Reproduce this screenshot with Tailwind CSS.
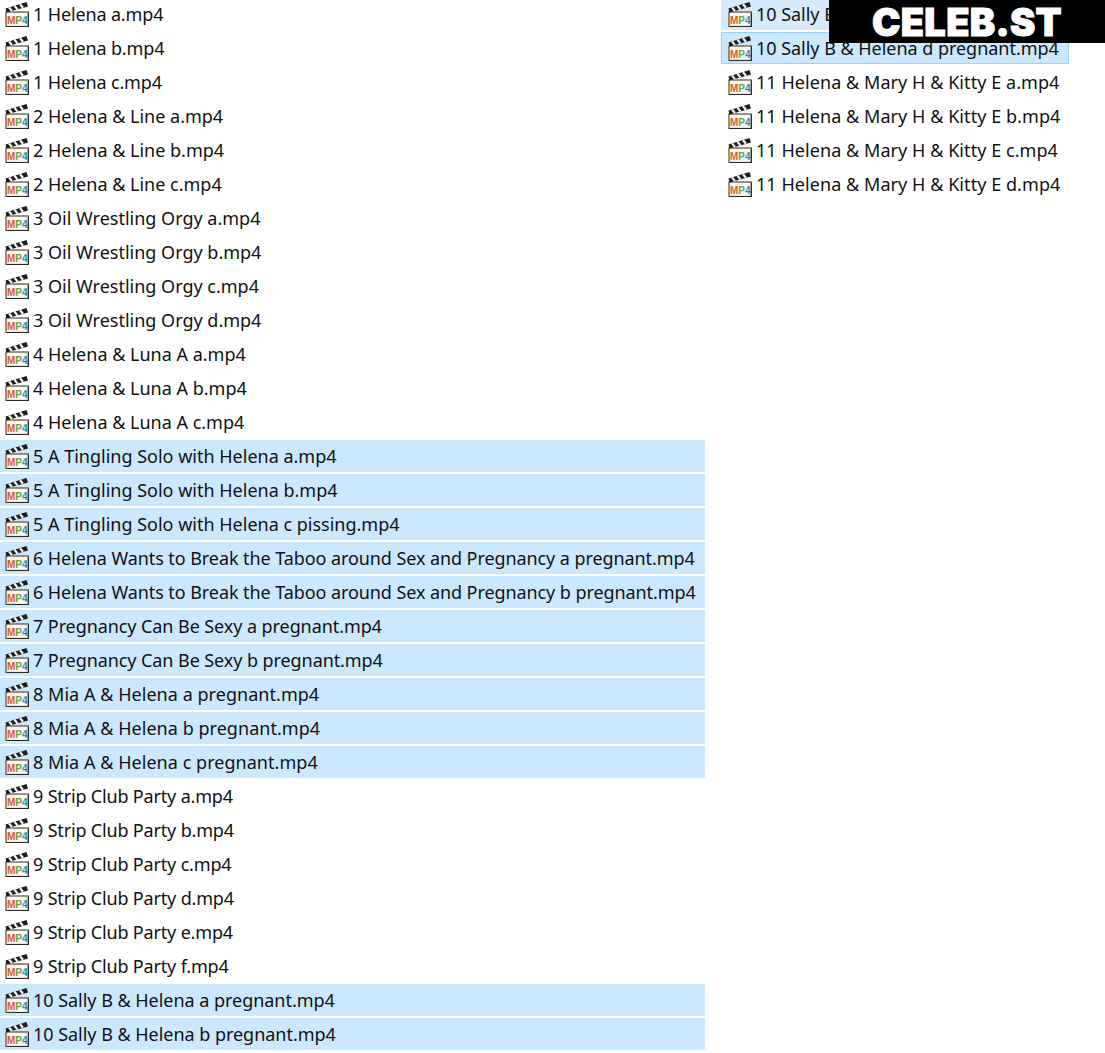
<!doctype html>
<html><head><meta charset="utf-8"><script src="https://cdn.jsdelivr.net/npm/@tailwindcss/browser@4"></script></head>
<body class="bg-white">
<svg class="hidden" width="0" height="0"><defs><symbol id="mp4" viewBox="0 0 24 26">
<rect x="1" y="11" width="22.5" height="14.5" fill="#fbf8f0" stroke="#5a4a3a" stroke-width="1.2"/>
<path d="M23.4 12 V25.6 H2" fill="none" stroke="#2c2a26" stroke-width="1.4"/>
<path d="M0.5 7.5 L21.5 1 L23 5.5 L1.5 11.5 Z" fill="#1d1d1d"/>
<path d="M4 6.5 L7 10 M9.5 4.8 L12.5 8.5 M15 3.2 L18 6.8" stroke="#f2f2f2" stroke-width="2.2"/>
<text x="2" y="22.5" font-family="Liberation Sans" font-weight="700" font-size="11" textLength="20.5" lengthAdjust="spacingAndGlyphs"><tspan fill="#dd5a25">M</tspan><tspan fill="#6ea04a">P</tspan><tspan fill="#1f8fb0">4</tspan></text>
</symbol></defs></svg>
<main class="relative h-[1053px] w-[1105px] overflow-hidden font-['Noto_Sans','Open_Sans',sans-serif] text-[18px] text-[#111]">
<div class="-mt-[2px] flex items-start gap-[16px]">
<ul class="flex w-[705px] shrink-0 flex-col gap-[2px]">
<li class="flex h-[32px] items-center pl-[5px] tracking-[-0.14px]"><svg class="mr-[4px] h-[26px] w-[24px]"><use href="#mp4"/></svg>1 Helena a.mp4</li>
<li class="flex h-[32px] items-center pl-[5px] tracking-[-0.14px]"><svg class="mr-[4px] h-[26px] w-[24px]"><use href="#mp4"/></svg>1 Helena b.mp4</li>
<li class="flex h-[32px] items-center pl-[5px] tracking-[-0.14px]"><svg class="mr-[4px] h-[26px] w-[24px]"><use href="#mp4"/></svg>1 Helena c.mp4</li>
<li class="flex h-[32px] items-center pl-[5px]"><svg class="mr-[4px] h-[26px] w-[24px]"><use href="#mp4"/></svg>2 Helena &amp; Line a.mp4</li>
<li class="flex h-[32px] items-center pl-[5px]"><svg class="mr-[4px] h-[26px] w-[24px]"><use href="#mp4"/></svg>2 Helena &amp; Line b.mp4</li>
<li class="flex h-[32px] items-center pl-[5px]"><svg class="mr-[4px] h-[26px] w-[24px]"><use href="#mp4"/></svg>2 Helena &amp; Line c.mp4</li>
<li class="flex h-[32px] items-center pl-[5px]"><svg class="mr-[4px] h-[26px] w-[24px]"><use href="#mp4"/></svg>3 Oil Wrestling Orgy a.mp4</li>
<li class="flex h-[32px] items-center pl-[5px]"><svg class="mr-[4px] h-[26px] w-[24px]"><use href="#mp4"/></svg>3 Oil Wrestling Orgy b.mp4</li>
<li class="flex h-[32px] items-center pl-[5px]"><svg class="mr-[4px] h-[26px] w-[24px]"><use href="#mp4"/></svg>3 Oil Wrestling Orgy c.mp4</li>
<li class="flex h-[32px] items-center pl-[5px]"><svg class="mr-[4px] h-[26px] w-[24px]"><use href="#mp4"/></svg>3 Oil Wrestling Orgy d.mp4</li>
<li class="flex h-[32px] items-center pl-[5px]"><svg class="mr-[4px] h-[26px] w-[24px]"><use href="#mp4"/></svg>4 Helena &amp; Luna A a.mp4</li>
<li class="flex h-[32px] items-center pl-[5px]"><svg class="mr-[4px] h-[26px] w-[24px]"><use href="#mp4"/></svg>4 Helena &amp; Luna A b.mp4</li>
<li class="flex h-[32px] items-center pl-[5px]"><svg class="mr-[4px] h-[26px] w-[24px]"><use href="#mp4"/></svg>4 Helena &amp; Luna A c.mp4</li>
<li class="flex h-[32px] items-center bg-[#cce8ff] pl-[5px]"><svg class="mr-[4px] h-[26px] w-[24px]"><use href="#mp4"/></svg>5 A Tingling Solo with Helena a.mp4</li>
<li class="flex h-[32px] items-center bg-[#cce8ff] pl-[5px]"><svg class="mr-[4px] h-[26px] w-[24px]"><use href="#mp4"/></svg>5 A Tingling Solo with Helena b.mp4</li>
<li class="flex h-[32px] items-center bg-[#cce8ff] pl-[5px]"><svg class="mr-[4px] h-[26px] w-[24px]"><use href="#mp4"/></svg>5 A Tingling Solo with Helena c pissing.mp4</li>
<li class="flex h-[32px] items-center bg-[#cce8ff] pl-[5px] tracking-[-0.08px]"><svg class="mr-[4px] h-[26px] w-[24px]"><use href="#mp4"/></svg>6 Helena Wants to Break the Taboo around Sex and Pregnancy a pregnant.mp4</li>
<li class="flex h-[32px] items-center bg-[#cce8ff] pl-[5px] tracking-[-0.08px]"><svg class="mr-[4px] h-[26px] w-[24px]"><use href="#mp4"/></svg>6 Helena Wants to Break the Taboo around Sex and Pregnancy b pregnant.mp4</li>
<li class="flex h-[32px] items-center bg-[#cce8ff] pl-[5px] tracking-[-0.08px]"><svg class="mr-[4px] h-[26px] w-[24px]"><use href="#mp4"/></svg>7 Pregnancy Can Be Sexy a pregnant.mp4</li>
<li class="flex h-[32px] items-center bg-[#cce8ff] pl-[5px] tracking-[-0.08px]"><svg class="mr-[4px] h-[26px] w-[24px]"><use href="#mp4"/></svg>7 Pregnancy Can Be Sexy b pregnant.mp4</li>
<li class="flex h-[32px] items-center bg-[#cce8ff] pl-[5px] tracking-[0.04px]"><svg class="mr-[4px] h-[26px] w-[24px]"><use href="#mp4"/></svg>8 Mia A &amp; Helena a pregnant.mp4</li>
<li class="flex h-[32px] items-center bg-[#cce8ff] pl-[5px] tracking-[0.04px]"><svg class="mr-[4px] h-[26px] w-[24px]"><use href="#mp4"/></svg>8 Mia A &amp; Helena b pregnant.mp4</li>
<li class="flex h-[32px] items-center bg-[#cce8ff] pl-[5px] tracking-[0.04px]"><svg class="mr-[4px] h-[26px] w-[24px]"><use href="#mp4"/></svg>8 Mia A &amp; Helena c pregnant.mp4</li>
<li class="flex h-[32px] items-center pl-[5px] tracking-[-0.17px]"><svg class="mr-[4px] h-[26px] w-[24px]"><use href="#mp4"/></svg>9 Strip Club Party a.mp4</li>
<li class="flex h-[32px] items-center pl-[5px] tracking-[-0.17px]"><svg class="mr-[4px] h-[26px] w-[24px]"><use href="#mp4"/></svg>9 Strip Club Party b.mp4</li>
<li class="flex h-[32px] items-center pl-[5px] tracking-[-0.17px]"><svg class="mr-[4px] h-[26px] w-[24px]"><use href="#mp4"/></svg>9 Strip Club Party c.mp4</li>
<li class="flex h-[32px] items-center pl-[5px] tracking-[-0.17px]"><svg class="mr-[4px] h-[26px] w-[24px]"><use href="#mp4"/></svg>9 Strip Club Party d.mp4</li>
<li class="flex h-[32px] items-center pl-[5px] tracking-[-0.17px]"><svg class="mr-[4px] h-[26px] w-[24px]"><use href="#mp4"/></svg>9 Strip Club Party e.mp4</li>
<li class="flex h-[32px] items-center pl-[5px] tracking-[-0.17px]"><svg class="mr-[4px] h-[26px] w-[24px]"><use href="#mp4"/></svg>9 Strip Club Party f.mp4</li>
<li class="flex h-[32px] items-center bg-[#cce8ff] pl-[5px] tracking-[-0.03px]"><svg class="mr-[4px] h-[26px] w-[24px]"><use href="#mp4"/></svg>10 Sally B &amp; Helena a pregnant.mp4</li>
<li class="flex h-[32px] items-center bg-[#cce8ff] pl-[5px] tracking-[-0.03px]"><svg class="mr-[4px] h-[26px] w-[24px]"><use href="#mp4"/></svg>10 Sally B &amp; Helena b pregnant.mp4</li>
</ul>
<ul class="flex w-[348px] shrink-0 flex-col gap-[2px]">
<li class="flex h-[32px] items-center bg-[#d5ebfb] pl-[7px] tracking-[-0.03px]"><svg class="mr-[4px] h-[26px] w-[24px]"><use href="#mp4"/></svg>10 Sally B &amp; Helena c pregnant.mp4</li>
<li class="flex h-[32px] items-center border border-[#99d1ff] bg-[#cce8ff] pl-[6px] tracking-[-0.03px]"><svg class="mr-[4px] h-[26px] w-[24px]"><use href="#mp4"/></svg>10 Sally B &amp; Helena d pregnant.mp4</li>
<li class="flex h-[32px] items-center pl-[7px] tracking-[0.06px]"><svg class="mr-[4px] h-[26px] w-[24px]"><use href="#mp4"/></svg>11 Helena &amp; Mary H &amp; Kitty E a.mp4</li>
<li class="flex h-[32px] items-center pl-[7px] tracking-[0.06px]"><svg class="mr-[4px] h-[26px] w-[24px]"><use href="#mp4"/></svg>11 Helena &amp; Mary H &amp; Kitty E b.mp4</li>
<li class="flex h-[32px] items-center pl-[7px] tracking-[0.06px]"><svg class="mr-[4px] h-[26px] w-[24px]"><use href="#mp4"/></svg>11 Helena &amp; Mary H &amp; Kitty E c.mp4</li>
<li class="flex h-[32px] items-center pl-[7px] tracking-[0.06px]"><svg class="mr-[4px] h-[26px] w-[24px]"><use href="#mp4"/></svg>11 Helena &amp; Mary H &amp; Kitty E d.mp4</li>
</ul>
</div>
<div class="absolute right-0 top-0 flex h-[43px] w-[276px] items-center justify-center bg-black font-['Inter',sans-serif] text-[38px] font-black leading-none tracking-[0.3px] text-white [-webkit-text-stroke:1px_white]">CELEB.ST</div>
</main>
</body></html>
